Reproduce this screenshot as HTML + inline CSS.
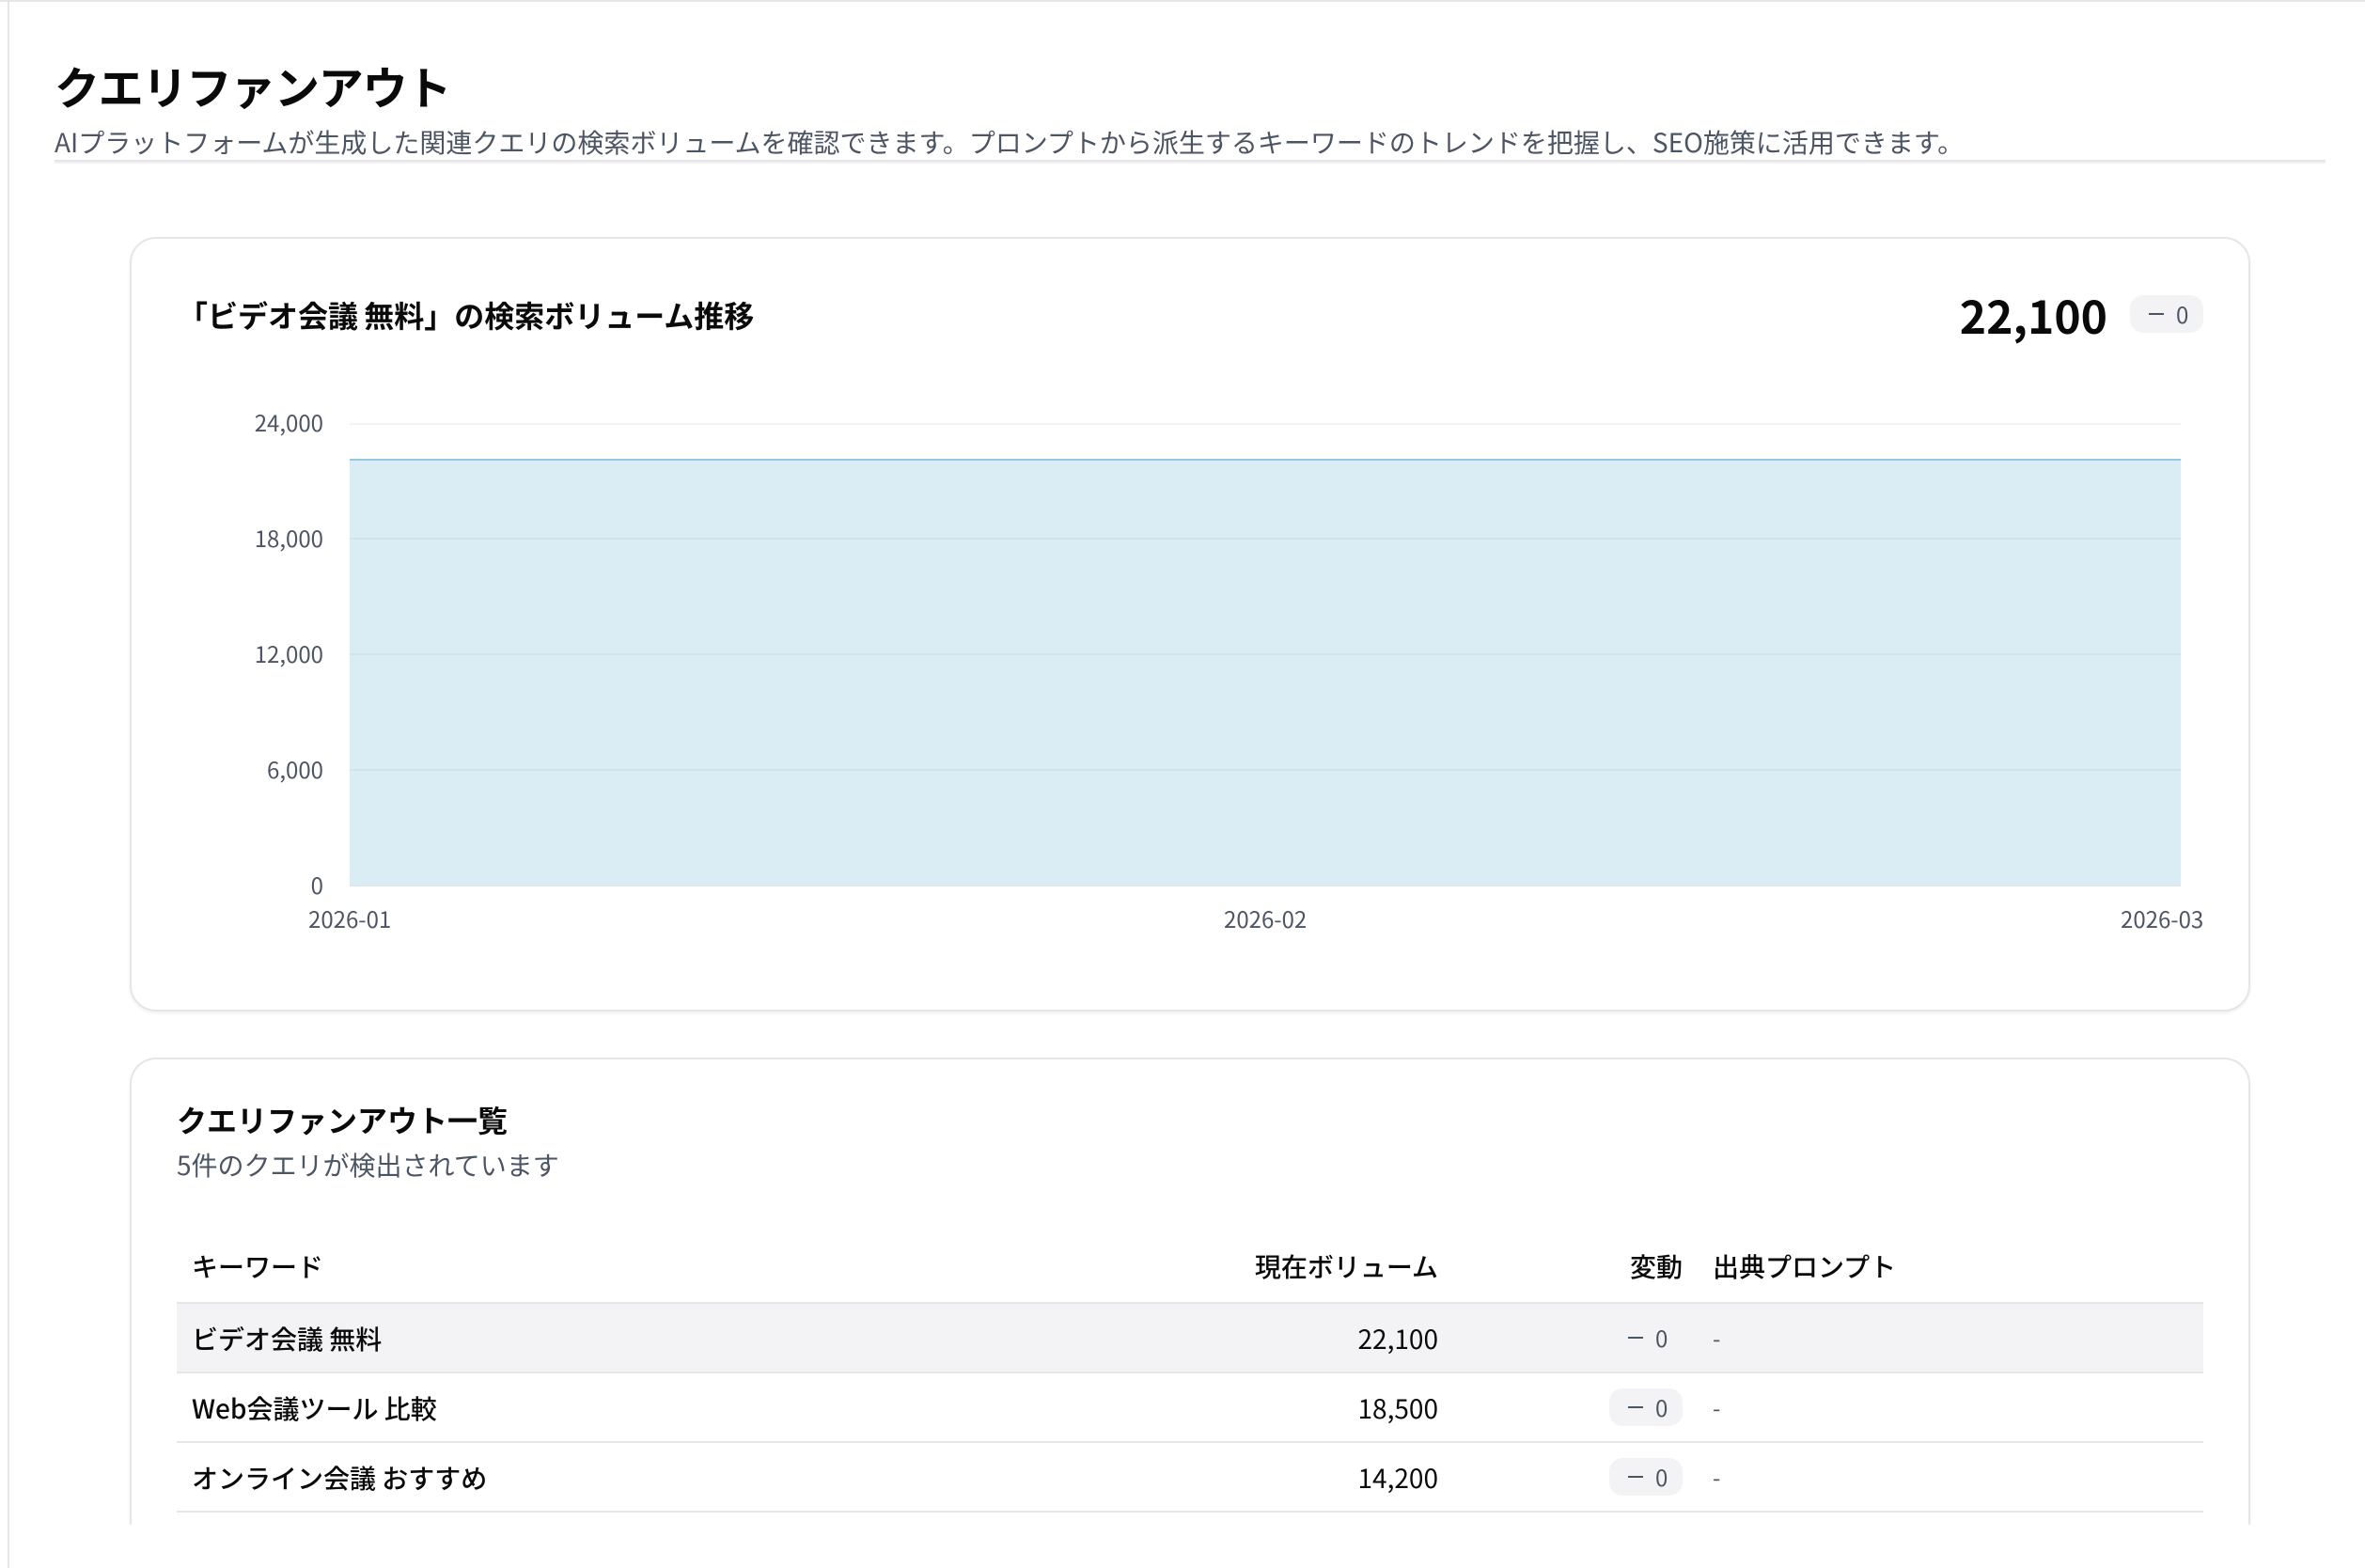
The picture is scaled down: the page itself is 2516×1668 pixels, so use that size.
<!DOCTYPE html>
<html lang="ja"><head><meta charset="utf-8"><title>クエリファンアウト</title>
<style>
*{box-sizing:border-box;margin:0;padding:0}
html,body{width:2516px;height:1668px;background:#fff;overflow:hidden}
body{position:relative;font-family:"Noto Sans CJK JP","Liberation Sans",sans-serif;color:#0a0a0a}
.t{position:absolute;white-space:nowrap;line-height:60px;height:60px}
.r{text-align:right}
.g{color:#4b5563}
.card{position:absolute;left:138px;width:2256px;background:#fff;border:2px solid #e5e5ea;border-radius:28px;box-shadow:0 2px 3px rgba(0,0,0,.06)}
.line{position:absolute;left:188px;width:2156px;height:2px;background:#e5e5ea}
.badge{position:absolute;width:78px;height:40px;border-radius:14px;background:#f3f3f6}
.minus{position:absolute;width:16px;height:2px;background:#4b5563}
</style></head><body>
<div style="position:absolute;left:0;top:0;width:2516px;height:2px;background:#e5e5ea"></div>
<div style="position:absolute;left:8px;top:0;width:2px;height:1668px;background:#e5e5ea"></div>

<div class="t" style="left:58px;top:60px;font-size:48px;font-weight:700;letter-spacing:-1.2px">クエリファンアウト</div>
<div class="t g" style="left:58px;top:121px;font-size:28px">AIプラットフォームが生成した関連クエリの検索ボリュームを確認できます。プロンプトから派生するキーワードのトレンドを把握し、SEO施策に活用できます。</div>
<div style="position:absolute;left:58px;top:170px;width:2416px;height:2px;background:#e5e5ea"></div>
<div style="position:absolute;left:58px;top:172px;width:2416px;height:2px;background:#f2f2f4"></div>

<div class="card" style="top:252px;height:824px"></div>
<div class="t" style="left:189px;top:305px;font-size:32px;font-weight:700;word-spacing:-1px">「ビデオ会議 無料」の検索ボリューム推移</div>
<div class="t" style="left:2042px;width:200px;top:304px;font-size:48px;font-weight:700;text-align:right">22,100</div>
<div class="badge" style="left:2266px;top:314px"></div>
<div class="minus" style="left:2286px;top:333px"></div>
<div class="t g" style="left:2315px;top:304px;font-size:24px">0</div>

<svg style="position:absolute;left:372px;top:440px" width="1948" height="510" viewBox="372 440 1948 510">
<rect x="372" y="450" width="1948" height="2" fill="#f3f3f5"/>
<rect x="372" y="489" width="1948" height="453" fill="#daedf5"/>
<rect x="372" y="488" width="1948" height="2" fill="#94c8df"/>
<rect x="372" y="572" width="1948" height="2" fill="#cfe3ed"/>
<rect x="372" y="695" width="1948" height="2" fill="#cfe3ed"/>
<rect x="372" y="818" width="1948" height="2" fill="#cfe3ed"/>
<rect x="372" y="941" width="1948" height="2" fill="#dde7ef"/>
</svg>
<div class="t g r" style="left:200px;width:144px;top:419px;font-size:24px">24,000</div>
<div class="t g r" style="left:200px;width:144px;top:542px;font-size:24px">18,000</div>
<div class="t g r" style="left:200px;width:144px;top:665px;font-size:24px">12,000</div>
<div class="t g r" style="left:200px;width:144px;top:788px;font-size:24px">6,000</div>
<div class="t g r" style="left:200px;width:144px;top:911px;font-size:24px">0</div>
<div class="t g" style="left:328px;top:947px;font-size:24px">2026-01</div>
<div class="t g" style="left:1302px;top:947px;font-size:24px">2026-02</div>
<div class="t g" style="left:2256px;top:947px;font-size:24px">2026-03</div>

<div class="card" style="top:1125px;height:497px;border-bottom:none;border-radius:28px 28px 0 0;clip-path:inset(-10px -10px 0 -10px)"></div>

<div class="t" style="left:188px;top:1161px;font-size:32px;font-weight:700">クエリファンアウト一覧</div>
<div class="t g" style="left:188px;top:1209px;font-size:28px">5件のクエリが検出されています</div>

<div class="t" style="left:204px;top:1317px;font-size:28px;font-weight:500">キーワード</div>
<div class="t r" style="left:1200px;width:330px;top:1317px;font-size:28px;font-weight:500">現在ボリューム</div>
<div class="t r" style="left:1600px;width:190px;top:1317px;font-size:28px;font-weight:500">変動</div>
<div class="t" style="left:1822px;top:1317px;font-size:28px;font-weight:500">出典プロンプト</div>
<div class="line" style="top:1385px"></div>

<div style="position:absolute;left:188px;top:1387px;width:2156px;height:72px;background:#f3f3f6"></div>
<div class="line" style="top:1459px"></div>
<div class="line" style="top:1533px"></div>
<div class="line" style="top:1607px"></div>

<div class="t" style="left:204px;top:1394px;font-size:28px;font-weight:500">ビデオ会議 無料</div>
<div class="t r" style="left:1200px;width:330px;top:1394px;font-size:28px">22,100</div>
<div class="minus" style="left:1732px;top:1422px"></div>
<div class="t g" style="left:1761px;top:1393px;font-size:24px">0</div>
<div class="t g" style="left:1822px;top:1393px;font-size:24px">-</div>

<div class="t" style="left:204px;top:1468px;font-size:28px;font-weight:500">Web会議ツール 比較</div>
<div class="t r" style="left:1200px;width:330px;top:1468px;font-size:28px">18,500</div>
<div class="badge" style="left:1712px;top:1477px"></div>
<div class="minus" style="left:1732px;top:1496px"></div>
<div class="t g" style="left:1761px;top:1467px;font-size:24px">0</div>
<div class="t g" style="left:1822px;top:1467px;font-size:24px">-</div>

<div class="t" style="left:204px;top:1542px;font-size:28px;font-weight:500">オンライン会議 おすすめ</div>
<div class="t r" style="left:1200px;width:330px;top:1542px;font-size:28px">14,200</div>
<div class="badge" style="left:1712px;top:1551px"></div>
<div class="minus" style="left:1732px;top:1570px"></div>
<div class="t g" style="left:1761px;top:1541px;font-size:24px">0</div>
<div class="t g" style="left:1822px;top:1541px;font-size:24px">-</div>
</body></html>
